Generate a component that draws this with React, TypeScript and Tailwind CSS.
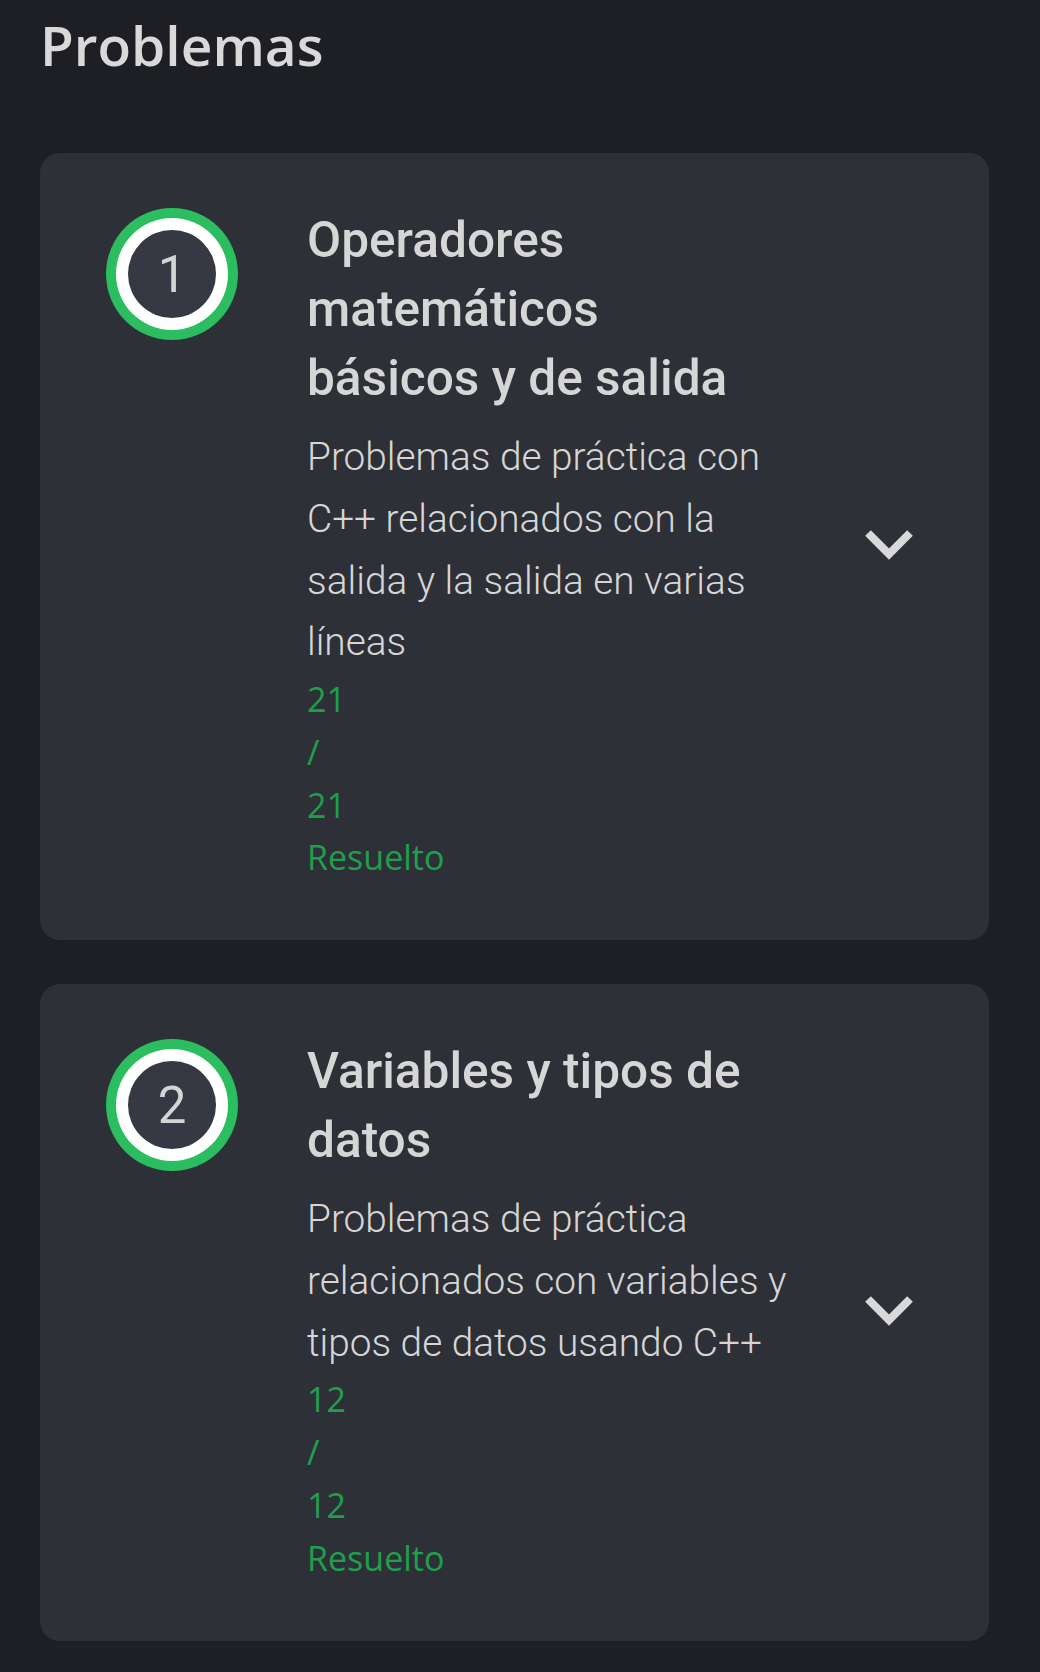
const problemSets = [
  {
    n: 1,
    title: "Operadores matemáticos básicos y de salida",
    description: "Problemas de práctica con C++ relacionados con la salida y la salida en varias líneas",
    solved: 21,
    total: 21,
  },
  {
    n: 2,
    title: "Variables y tipos de datos",
    description: "Problemas de práctica relacionados con variables y tipos de datos usando C++",
    solved: 12,
    total: 12,
  },
];

function Chevron() {
  return (
    <svg width="50" height="32" viewBox="0 0 50 32" fill="none">
      <path d="M4 4 L25 25 L46 4" stroke="#d9d9d9" strokeWidth="8" />
    </svg>
  );
}

function Badge({ n }: { n: number }) {
  return (
    <div className="mt-[2px] flex h-[132px] w-[132px] shrink-0 items-center justify-center rounded-full bg-[#2bbd5f] p-[10px]">
      <div className="flex h-full w-full items-center justify-center rounded-full bg-white p-[12px]">
        <div className="flex h-full w-full items-center justify-center rounded-full bg-[#363943] font-['Roboto',sans-serif] text-[51px] leading-none text-[#d4d4d4]">
          {n}
        </div>
      </div>
    </div>
  );
}

export default function App() {
  return (
    <div className="min-h-screen w-full bg-[#1e1f24] pb-10">
      <div className="ml-10 w-[949px]">
        <h1 className="pt-[7px] font-['Open_Sans',sans-serif] text-[55px] font-semibold leading-[76px] text-[#d9d9d9]">
          Problemas
        </h1>

        <div className="mt-[70px] flex flex-col gap-[44px]">
          {problemSets.map((p) => (
            <div
              key={p.n}
              className="flex items-start rounded-[20px] bg-[#2e3038] pb-[56px] pl-[66px] pr-[75px] pt-[53px]"
            >
              <Badge n={p.n} />
              <div className="ml-[69px] w-[484px]">
                <h2 className="max-w-[462px] font-['Roboto',sans-serif] text-[49.6px] font-medium leading-[69px] text-[#d6d6d6]">
                  {p.title}
                </h2>
                <p className="mt-[13px] font-['Roboto',sans-serif] text-[38.8px] font-light leading-[61.75px] text-[#d6d6d6]">
                  {p.description}
                </p>
                <div className="font-['Open_Sans',sans-serif] text-[34px] leading-[52.8px] text-[#1f9f4b]">
                  <div>{p.solved}</div>
                  <div>/</div>
                  <div>{p.total}</div>
                  <div>Resuelto</div>
                </div>
              </div>
              <div className="ml-auto self-center">
                <Chevron />
              </div>
            </div>
          ))}
        </div>
      </div>
    </div>
  );
}
